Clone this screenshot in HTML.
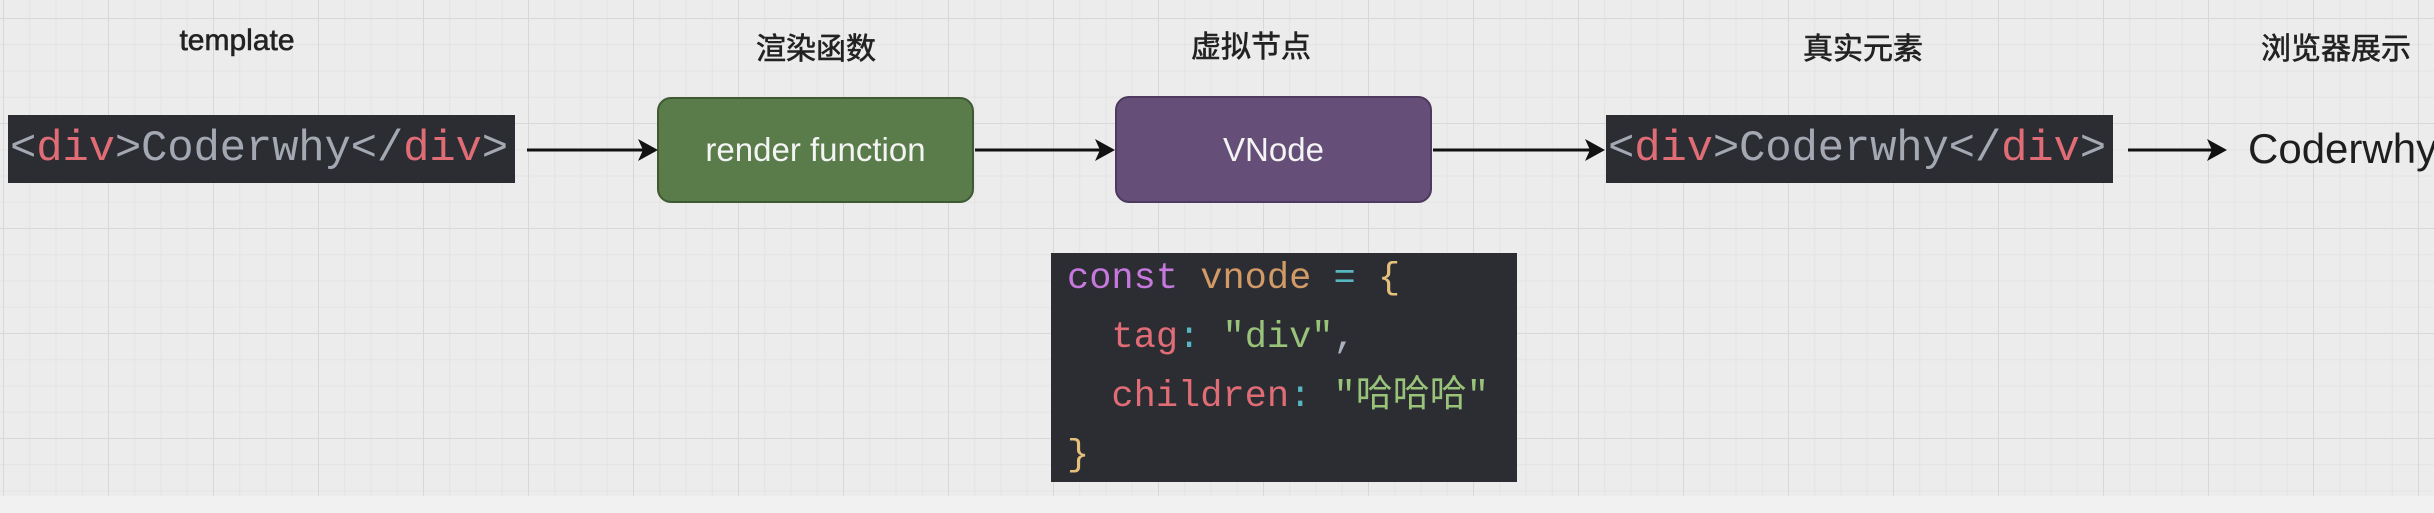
<!DOCTYPE html>
<html><head><meta charset="utf-8"><style>
html,body{margin:0;padding:0}
body{width:2434px;height:513px;position:relative;overflow:hidden;background:#ececec;
background-image:linear-gradient(to right,#d8d8d8 1px,transparent 1px),linear-gradient(to bottom,#d8d8d8 1px,transparent 1px),linear-gradient(to right,#e3e3e3 1px,transparent 1px),linear-gradient(to bottom,#e3e3e3 1px,transparent 1px);
background-size:105px 105px,105px 105px,26.25px 26.25px,26.25px 26.25px;background-position:3px 18px,3px 18px,3px 18px,3px 18px;
font-family:"Liberation Sans","Noto Sans CJK SC",sans-serif}
.abs{position:absolute}
.lbl{position:absolute;font-size:30px;color:#222;transform:translateX(-50%);white-space:nowrap;top:24px;-webkit-text-stroke:0.6px #222}
.code{position:absolute;background:#2b2d33;font-family:"Liberation Mono","Noto Sans CJK SC",monospace;color:#a3a8b2;white-space:pre;box-sizing:border-box}
.tpl{height:68px;top:115px;font-size:44px;line-height:68px;padding-left:2px;width:507px;overflow:hidden;letter-spacing:-0.2px}
.r{color:#e06c75}
.box{position:absolute;border-radius:14px;color:#f4f4f4;font-size:33px;display:flex;align-items:center;justify-content:center;box-sizing:border-box}
.bottom{position:absolute;left:0;top:496px;width:2434px;height:17px;background:#f1f1f1}
</style></head><body>
<div class="bottom"></div>
<div class="lbl" style="left:237px">template</div>
<div class="lbl" style="left:816px;top:24px">渲染函数</div>
<div class="lbl" style="left:1251px;top:22px">虚拟节点</div>
<div class="lbl" style="left:1863px;top:24px">真实元素</div>
<div class="lbl" style="left:2336px;top:24px">浏览器展示</div>

<div class="code tpl" style="left:8px">&lt;<span class="r">div</span>&gt;Coderwhy&lt;/<span class="r">div</span>&gt;</div>
<div class="code tpl" style="left:1606px">&lt;<span class="r">div</span>&gt;Coderwhy&lt;/<span class="r">div</span>&gt;</div>

<div class="box" style="left:657px;top:97px;width:317px;height:106px;background:#5a7c4a;border:2px solid #3f5a33">render function</div>
<div class="box" style="left:1115px;top:96px;width:317px;height:107px;background:#654e78;border:2px solid #4d3a5e">VNode</div>

<div class="code" style="left:1051px;top:253px;width:466px;height:229px;font-size:37px;line-height:59px;padding:0 0 0 16px;color:#abb2bf"><div style="margin-top:-3px"><span style="color:#c678dd">const</span> <span style="color:#d19a66">vnode</span> <span style="color:#56b6c2">=</span> <span style="color:#e5c07b">{</span></div><div>  <span class="r">tag</span><span style="color:#56b6c2">:</span> <span style="color:#98c379">"div"</span>,</div><div>  <span class="r">children</span><span style="color:#56b6c2">:</span> <span style="color:#98c379">"哈哈哈"</span></div><div><span style="color:#e5c07b">}</span></div></div>

<svg class="abs" style="left:0;top:0" width="2434" height="513">
<g stroke="#111" stroke-width="3" fill="#111">
<line x1="527" y1="150" x2="645" y2="150"/><path d="M658 150 L638 139 L643 150 L638 161 Z" stroke="none"/>
<line x1="975" y1="150" x2="1103" y2="150"/><path d="M1115 150 L1095 139 L1100 150 L1095 161 Z" stroke="none"/>
<line x1="1433" y1="150" x2="1593" y2="150"/><path d="M1605 150 L1585 139 L1590 150 L1585 161 Z" stroke="none"/>
<line x1="2128" y1="150" x2="2214" y2="150"/><path d="M2227 150 L2207 139 L2212 150 L2207 161 Z" stroke="none"/>
</g></svg>
<div class="abs" style="left:2248px;top:125px;font-size:42px;color:#1e1e1e;white-space:nowrap">Coderwhy</div>
</body></html>
